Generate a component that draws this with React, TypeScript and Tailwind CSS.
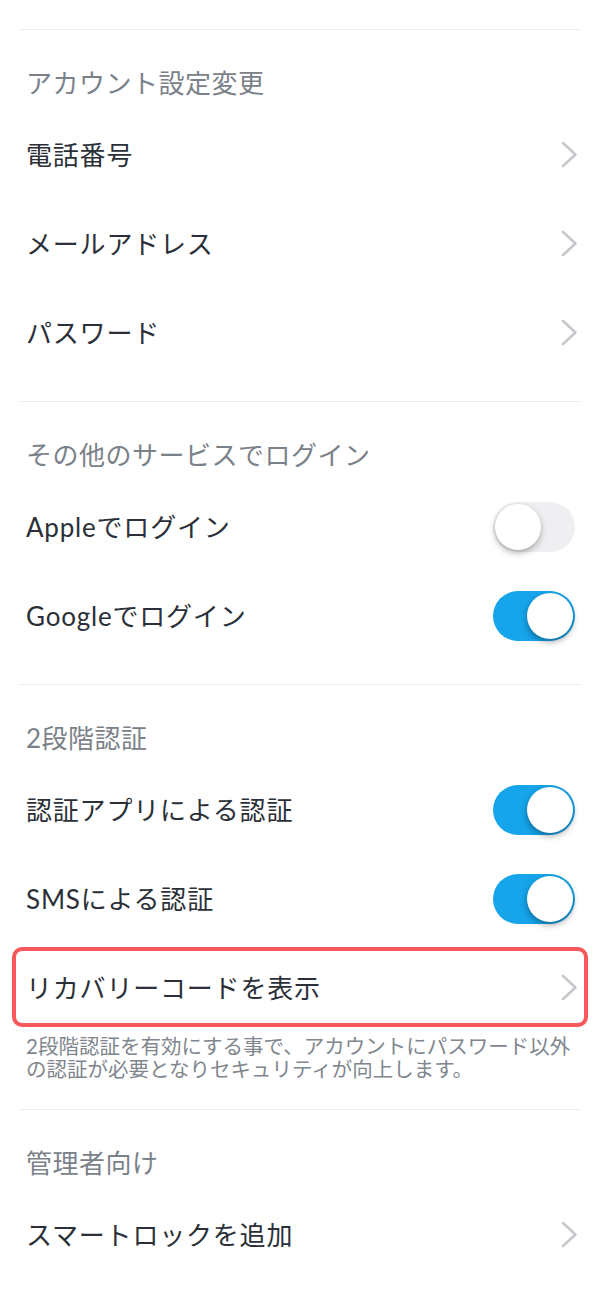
import React from 'react';

type Row =
  | { kind: 'link'; label: string; highlight?: boolean }
  | { kind: 'toggle'; label: string; on: boolean };

type Section = {
  title: string;
  rows: Row[];
  note?: string[];
};

const sections: Section[] = [
  {
    title: 'アカウント設定変更',
    rows: [
      { kind: 'link', label: '電話番号' },
      { kind: 'link', label: 'メールアドレス' },
      { kind: 'link', label: 'パスワード' },
    ],
  },
  {
    title: 'その他のサービスでログイン',
    rows: [
      { kind: 'toggle', label: 'Appleでログイン', on: false },
      { kind: 'toggle', label: 'Googleでログイン', on: true },
    ],
  },
  {
    title: '2段階認証',
    rows: [
      { kind: 'toggle', label: '認証アプリによる認証', on: true },
      { kind: 'toggle', label: 'SMSによる認証', on: true },
      { kind: 'link', label: 'リカバリーコードを表示', highlight: true },
    ],
    note: [
      '2段階認証を有効にする事で、アカウントにパスワード以外',
      'の認証が必要となりセキュリティが向上します。',
    ],
  },
  {
    title: '管理者向け',
    rows: [{ kind: 'link', label: 'スマートロックを追加' }],
  },
];

function Chevron() {
  return (
    <svg width="17" height="27" viewBox="0 0 17 27" fill="none" className="mr-[3px]">
      <path
        d="M2 2 L14.5 13.5 L2 25"
        stroke="#c5c8cd"
        strokeWidth="2.6"
        strokeLinecap="round"
        strokeLinejoin="round"
      />
    </svg>
  );
}

function Toggle({ on }: { on: boolean }) {
  return (
    <div
      className={
        on
          ? 'relative mr-[6px] h-[50px] w-[82px] rounded-full bg-[#16a4ea]'
          : 'relative mr-[6px] h-[50px] w-[82px] rounded-full bg-[#efeff1]'
      }
    >
      <div
        className={
          on
            ? 'absolute right-[2px] top-[2px] h-[46px] w-[46px] rounded-full bg-white shadow-[0_3px_6px_rgba(0,0,0,0.35)]'
            : 'absolute left-[2px] top-[2px] h-[46px] w-[46px] rounded-full bg-white shadow-[0_3px_6px_rgba(0,0,0,0.3)]'
        }
      />
    </div>
  );
}

export default function App() {
  return (
    <main
      className="min-h-[1303px] bg-white px-[19px] pt-[29px] text-[#2b3038]"
      style={{ fontFamily: "Lato, 'Noto Sans CJK JP', sans-serif" }}
    >
      {sections.map((section) => (
        <section
          key={section.title}
          className={
            section.note
              ? 'border-t border-[#ebedf0] pb-[28px]'
              : 'border-t border-[#ebedf0] pb-[24px]'
          }
        >
          <h2 className="pb-[14px] pl-[7px] pt-[40px] text-[26px] leading-[26px] font-normal tracking-[0.5px] text-[#7b8189]">
            {section.title}
          </h2>

          {section.rows.map((row) => (
            <div key={row.label} className="relative">
              {row.kind === 'link' && row.highlight && (
                <div className="pointer-events-none absolute -left-[7px] -right-[7px] top-[4px] bottom-[5px] rounded-[10px] border-[4px] border-[#f6585b]" />
              )}
              <div className="flex h-[89px] items-center justify-between pl-[7px]">
                <span className="text-[26px] leading-none tracking-[0.8px]">{row.label}</span>
                {row.kind === 'link' ? <Chevron /> : <Toggle on={row.on} />}
              </div>
            </div>
          ))}

          {section.note && (
            <div className="pl-[7px] pt-[3px] text-[20.5px] leading-[23px] text-[#80868e]">
              {section.note.map((line) => (
                <p key={line}>{line}</p>
              ))}
            </div>
          )}
        </section>
      ))}
    </main>
  );
}
